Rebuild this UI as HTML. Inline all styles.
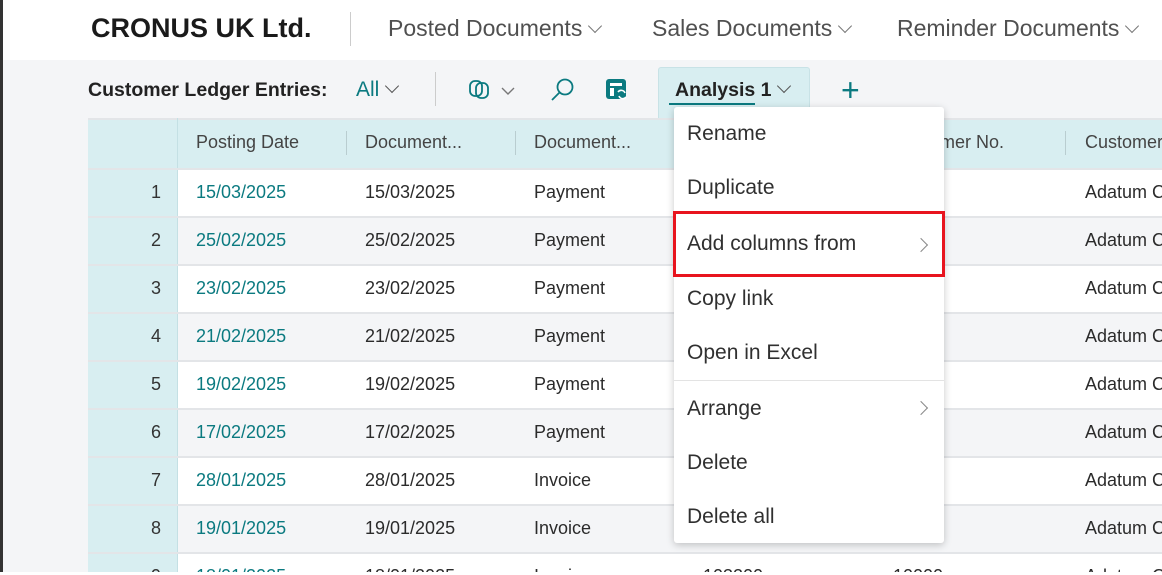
<!DOCTYPE html>
<html style="width:1162px;height:575px;overflow:hidden"><head><meta charset="utf-8"><style>
*{margin:0;padding:0;box-sizing:border-box}
body{width:1162px;height:575px;overflow:hidden;background:#f4f5f7;font-family:"Segoe UI","Liberation Sans",sans-serif;position:relative;color:#212121}
.a{position:absolute;white-space:nowrap}
.top{position:absolute;left:0;top:0;width:1162px;height:60px;background:#fff}
.lbar{position:absolute;left:0;top:0;width:3px;height:575px;background:#333;z-index:9}
.nav{font-size:23px;color:#505050;top:15px}
.chev{display:inline-block;width:10px;height:10px;border-right:1.5px solid #777;border-bottom:1.5px solid #777;transform:rotate(45deg);margin-left:8px;position:relative;top:-5px}
.row{position:absolute;left:88px;width:1074px;height:48px;border-top:2px solid #e3e5e8;overflow:hidden}
.num{position:absolute;left:0;top:0;width:90px;height:100%;background:#d8eef1;border-right:1px solid #c4e0e4;text-align:right;padding-right:16px;font-size:18px;line-height:44px;color:#333}
.c{position:absolute;top:0;line-height:44px;font-size:18px;color:#2b2b2b;white-space:nowrap}
.h{font-size:18px;color:#444;top:132px}
.menu{position:absolute;left:674px;top:107px;width:270px;height:436px;background:#fff;box-shadow:0 2px 8px rgba(0,0,0,.22);border-radius:3px}
.mi{position:absolute;left:13px;font-size:21px;color:#303030;white-space:nowrap}
.rc{display:inline-block;width:10px;height:10px;border-right:1.5px solid #888;border-top:1.5px solid #888;transform:rotate(45deg);position:absolute}
</style></head><body>
<div class="lbar"></div>
<div class="top"></div>
<div class="a" style="left:91px;top:13px;font-size:27px;color:#1a1a1a;font-weight:600">CRONUS UK Ltd.</div>
<div class="a" style="left:350px;top:12px;width:1px;height:34px;background:#ccc"></div>
<div class="a nav" style="left:388px">Posted Documents<span class="chev"></span></div>
<div class="a nav" style="left:652px">Sales Documents<span class="chev"></span></div>
<div class="a nav" style="left:897px">Reminder Documents<span class="chev"></span></div>

<div class="a" style="left:88px;top:79px;font-size:19.5px;font-weight:600;color:#222">Customer Ledger Entries:</div>
<div class="a" style="left:356px;top:78px;font-size:21px;color:#0b7a80">All<span class="chev" style="border-color:#555"></span></div>
<div class="a" style="left:435px;top:72px;width:1px;height:34px;background:#ccc"></div>
<svg class="a" style="left:468px;top:78px" width="54" height="24"><g fill="none" stroke="#0b7a80" stroke-width="1.8"><rect x="2" y="3" width="12" height="15" rx="5"/><rect x="8" y="5" width="12" height="15" rx="5"/></g><path d="M34 10l6 6 6-6" fill="none" stroke="#777" stroke-width="1.4"/></svg>
<svg class="a" style="left:550px;top:77px" width="26" height="26"><circle cx="15" cy="10" r="7.5" fill="none" stroke="#0b7a80" stroke-width="1.8"/><path d="M10 15L2 23" stroke="#0b7a80" stroke-width="1.8"/></svg>
<svg class="a" style="left:605px;top:78px" width="24" height="24"><rect x="1" y="1" width="20" height="20" rx="3" fill="#0b7a80"/><rect x="5" y="5" width="12" height="3" fill="#fff"/><rect x="5" y="10" width="4" height="8" fill="#fff"/><path d="M13 14a4 4 0 0 1 7 1M21 19a4 4 0 0 1-7-1" stroke="#fff" stroke-width="1.6" fill="none"/></svg>
<div class="a" style="left:658px;top:67px;width:152px;height:52px;background:#d8eef1;border:1px solid #c8e2e6;border-bottom:none;border-radius:3px 3px 0 0"></div>
<div class="a" style="left:675px;top:79px;font-size:19.5px;font-weight:600;color:#222">Analysis 1<span class="chev" style="border-color:#555"></span></div>
<div class="a" style="left:669px;top:103px;width:86px;height:2px;background:#0b7a80"></div>
<div class="a" style="left:841px;top:76px;font-size:32px;color:#0b7a80;line-height:28px;font-weight:300">+</div>

<div class="a" style="left:88px;top:118px;width:1074px;height:50px;background:#d8eef1;border-top:2px solid #e3e5e8"></div>
<div class="a" style="left:177px;top:118px;width:1px;height:50px;background:#c4e0e4"></div>
<div class="a h" style="left:196px">Posting Date</div>
<div class="a" style="left:346px;top:131px;width:1px;height:24px;background:#b9cdd0"></div>
<div class="a h" style="left:365px">Document...</div>
<div class="a" style="left:515px;top:131px;width:1px;height:24px;background:#b9cdd0"></div>
<div class="a h" style="left:534px">Document...</div>
<div class="a h" style="left:893px">Customer No.</div>
<div class="a" style="left:1065px;top:131px;width:1px;height:24px;background:#b9cdd0"></div>
<div class="a h" style="left:1085px">Customer</div>

<div class="row" style="top:168px;background:#fff"><div class="num">1</div><div class="c" style="left:108px;color:#0b7a80">15/03/2025</div><div class="c" style="left:277px">15/03/2025</div><div class="c" style="left:446px">Payment</div><div class="c" style="left:997px">Adatum C</div></div>
<div class="row" style="top:216px;background:#f4f5f7"><div class="num">2</div><div class="c" style="left:108px;color:#0b7a80">25/02/2025</div><div class="c" style="left:277px">25/02/2025</div><div class="c" style="left:446px">Payment</div><div class="c" style="left:997px">Adatum C</div></div>
<div class="row" style="top:264px;background:#fff"><div class="num">3</div><div class="c" style="left:108px;color:#0b7a80">23/02/2025</div><div class="c" style="left:277px">23/02/2025</div><div class="c" style="left:446px">Payment</div><div class="c" style="left:997px">Adatum C</div></div>
<div class="row" style="top:312px;background:#f4f5f7"><div class="num">4</div><div class="c" style="left:108px;color:#0b7a80">21/02/2025</div><div class="c" style="left:277px">21/02/2025</div><div class="c" style="left:446px">Payment</div><div class="c" style="left:997px">Adatum C</div></div>
<div class="row" style="top:360px;background:#fff"><div class="num">5</div><div class="c" style="left:108px;color:#0b7a80">19/02/2025</div><div class="c" style="left:277px">19/02/2025</div><div class="c" style="left:446px">Payment</div><div class="c" style="left:997px">Adatum C</div></div>
<div class="row" style="top:408px;background:#f4f5f7"><div class="num">6</div><div class="c" style="left:108px;color:#0b7a80">17/02/2025</div><div class="c" style="left:277px">17/02/2025</div><div class="c" style="left:446px">Payment</div><div class="c" style="left:997px">Adatum C</div></div>
<div class="row" style="top:456px;background:#fff"><div class="num">7</div><div class="c" style="left:108px;color:#0b7a80">28/01/2025</div><div class="c" style="left:277px">28/01/2025</div><div class="c" style="left:446px">Invoice</div><div class="c" style="left:997px">Adatum C</div></div>
<div class="row" style="top:504px;background:#f4f5f7"><div class="num">8</div><div class="c" style="left:108px;color:#0b7a80">19/01/2025</div><div class="c" style="left:277px">19/01/2025</div><div class="c" style="left:446px">Invoice</div><div class="c" style="left:997px">Adatum C</div></div>
<div class="row" style="top:552px;height:23px;background:#fff"><div class="num">9</div><div class="c" style="left:108px;color:#0b7a80">18/01/2025</div><div class="c" style="left:277px">18/01/2025</div><div class="c" style="left:446px">Invoice</div><div class="c" style="left:615px">103200</div><div class="c" style="left:805px">10000</div><div class="c" style="left:997px">Adatum C</div></div>
<div class="a" style="left:0;top:572px;width:1162px;height:3px;background:#fff;z-index:10"></div>

<div class="menu">
<div class="mi" style="top:15px">Rename</div>
<div class="mi" style="top:69px">Duplicate</div>
<div class="mi" style="top:125px">Add columns from</div><span class="rc" style="left:242px;top:133px"></span>
<div class="mi" style="top:180px">Copy link</div>
<div class="mi" style="top:234px">Open in Excel</div>
<div class="a" style="left:0;top:273px;width:270px;height:1px;background:#e3e3e3"></div>
<div class="mi" style="top:290px">Arrange</div><span class="rc" style="left:242px;top:296px"></span>
<div class="mi" style="top:344px">Delete</div>
<div class="mi" style="top:398px">Delete all</div>
</div>
<div class="a" style="left:673px;top:211px;width:272px;height:66px;border:3.5px solid #e8141e"></div>
</body></html>
